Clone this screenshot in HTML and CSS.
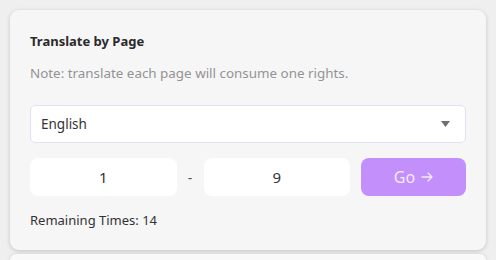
FILE: index.html
```html
<!DOCTYPE html>
<html>
<head>
<meta charset="utf-8">
<link rel="stylesheet" href="styles.css">
</head>
<body>
<div class="page">
  <div class="card">
    <div class="title">Translate by Page</div>
    <div class="note">Note: translate each page will consume one rights.</div>
    <div class="select">
      <span>English</span>
      <svg class="caret" width="9" height="6" viewBox="0 0 9 6"><path d="M0 0H9L4.5 6Z" fill="#6f6f75"/></svg>
    </div>
    <div class="range">
      <div class="num">1</div>
      <div class="dash">-</div>
      <div class="num">9</div>
      <button class="go">Go <svg class="arrow" width="12" height="10" viewBox="0 0 12 10"><path d="M1 5H11M7 1L11 5L7 9" fill="none" stroke="#f3eaff" stroke-width="1.3" stroke-linecap="round" stroke-linejoin="round"/></svg></button>
    </div>
    <div class="remain">Remaining Times: 14</div>
  </div>
  <div class="card next"></div>
</div>
</body>
</html>
```
FILE: styles.css
```css
html, body {
  margin: 0;
  padding: 0;
  background: #efeff0;
  font-family: "Noto Sans", "Open Sans", sans-serif;
  overflow: hidden;
  height: 260px;
}
.page {
  padding: 10px 10px 0 10px;
}
.card {
  box-sizing: border-box;
  width: 476px;
  height: 240px;
  background: #f6f6f7;
  border-radius: 9px;
  box-shadow: 0 1px 4px rgba(0,0,0,0.18);
  padding: 22px 20px 0 20px;
}
.card.next {
  margin-top: 4px;
  height: 6px;
  padding: 0;
  background: #f9f9fa;
  border-radius: 9px 9px 0 0;
}
.title {
  font-size: 13px;
  font-weight: 700;
  line-height: 18px;
  color: #2a2a2a;
}
.note {
  margin-top: 14px;
  font-size: 13.4px;
  line-height: 18px;
  color: #939395;
}
.select {
  margin-top: 23px;
  box-sizing: border-box;
  height: 38px;
  background: #fff;
  border: 1px solid #e3e0f3;
  border-radius: 5px;
  display: flex;
  align-items: center;
  justify-content: space-between;
  padding: 0 15px 0 10px;
  font-size: 13.5px;
  color: #333;
}
.caret {
  display: block;
}
.range {
  margin-top: 15px;
  display: grid;
  grid-template-columns: 1fr 27px 1fr 116px;
  height: 38px;
}
.num {
  background: #fff;
  border-radius: 8px;
  display: flex;
  align-items: center;
  justify-content: center;
  font-size: 15px;
  color: #333;
}
.dash {
  display: flex;
  align-items: center;
  justify-content: center;
  font-size: 14px;
  color: #555;
}
.go {
  margin-left: 11px;
  border: none;
  border-radius: 8px;
  background: #c28ffb;
  color: #f3eaff;
  font-family: "Noto Sans", "Open Sans", sans-serif;
  font-size: 16px;
  display: flex;
  align-items: center;
  justify-content: center;
  gap: 6px;
  padding: 0;
}
.arrow {
  display: block;
}
.remain {
  margin-top: 15px;
  font-size: 13px;
  line-height: 18px;
  color: #333;
}
```
